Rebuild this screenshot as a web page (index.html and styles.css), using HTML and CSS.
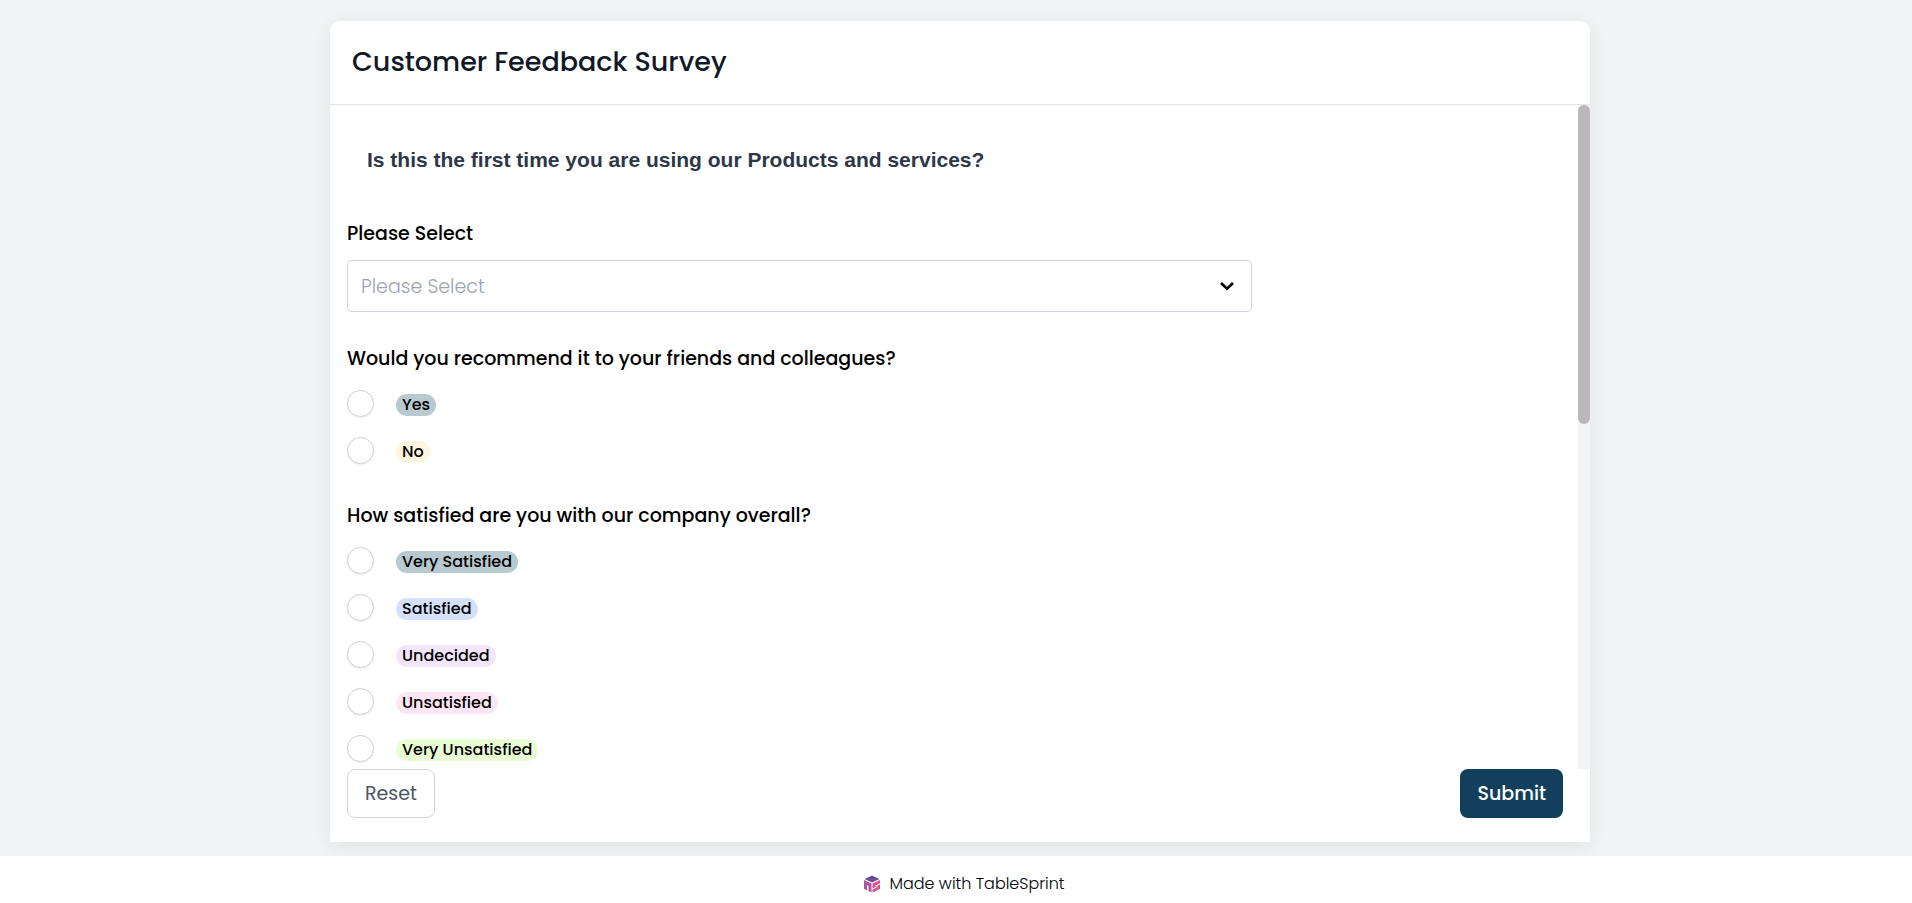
FILE: index.html
```html
<!DOCTYPE html>
<html lang="en">
<head>
    <meta charset="UTF-8">
    <meta name="viewport" content="width=device-width, initial-scale=1.0">
    <title>Customer Feedback Survey</title>
    <link rel="stylesheet" href="styles.css">
</head>
<body>
    <main class="page">
        <form class="card">
            <header class="card-header">
                <h1>Customer Feedback Survey</h1>
            </header>
            <div class="card-main">
                <div class="card-body">
                    <h2 class="section-title">Is this the first time you are using our Products and services?</h2>
                    <div class="field">
                        <label class="field-label" for="first-time">Please Select</label>
                        <div class="select-box">
                            <select id="first-time" name="first-time">
                                <option value="">Please Select</option>
                            </select>
                            <svg class="chevron" viewBox="0 0 16 10" aria-hidden="true">
                                <path d="M2 2l6 5.700L14 2" fill="none" stroke="#000" stroke-width="2.700"/>
                            </svg>
                        </div>
                    </div>
                    <fieldset class="field">
                        <legend class="field-label">Would you recommend it to your friends and colleagues?</legend>
                        <div class="options">
                            <label class="option"><input type="radio" name="recommend"><span class="tag teal">Yes</span></label>
                            <label class="option"><input type="radio" name="recommend"><span class="tag yellow">No</span></label>
                        </div>
                    </fieldset>
                    <fieldset class="field">
                        <legend class="field-label">How satisfied are you with our company overall?</legend>
                        <div class="options">
                            <label class="option"><input type="radio" name="satisfied"><span class="tag teal">Very Satisfied</span></label>
                            <label class="option"><input type="radio" name="satisfied"><span class="tag blue">Satisfied</span></label>
                            <label class="option"><input type="radio" name="satisfied"><span class="tag purple">Undecided</span></label>
                            <label class="option"><input type="radio" name="satisfied"><span class="tag pink">Unsatisfied</span></label>
                            <label class="option"><input type="radio" name="satisfied"><span class="tag green">Very Unsatisfied</span></label>
                        </div>
                    </fieldset>
                </div>
                <div class="scroll-track" aria-hidden="true">
                    <div class="scroll-thumb"></div>
                </div>
            </div>
            <div class="card-actions">
                <button type="reset" class="btn btn-reset">Reset</button>
                <button type="submit" class="btn btn-submit">Submit</button>
            </div>
        </form>
    </main>
    <footer class="footer">
        <svg class="logo" viewBox="0 0 18 18" aria-hidden="true">
            <path d="M9 .5 16.500 4 9 7.400 1.500 4z" fill="#6a4c93"/>
            <path d="M1 5l7.500 3.400v9.100l-3-1.400v-5.200l-1.500-.7v5.200l-3-1.500z" fill="#a9599f"/>
            <path d="M9.500 8.400 17 5v3.200l-4.600 2.200v1.200L17 9.400v4.400l-7.500 3.700v-3l5-2.400v-1l-5 2.300z" fill="#d9548a"/>
        </svg>
        <span>Made with TableSprint</span>
    </footer>
</body>
</html>
```
FILE: styles.css
```css
* {
    box-sizing: border-box;
}
body {
    margin: 0;
    height: 100vh;
    display: flex;
    flex-direction: column;
    font-family: "Poppins", "Inter", sans-serif;
    font-size: 19px;
    color: #000;
    background-color: #f2f3f5;
}
h1, h2, fieldset {
    margin: 0;
    padding: 0;
    border: 0;
}
.page {
    flex: 1;
    min-height: 0;
    display: flex;
    justify-content: center;
    padding: 21px 16px 14px 24px;
}
.card {
    width: 100%;
    max-width: 1260px;
    display: flex;
    flex-direction: column;
    background-color: #fff;
    border-radius: 10px 10px 0 0;
    box-shadow: 0 4px 20px rgba(0, 0, 0, 0.07);
}
.card-header {
    padding: 21px 22px 22px;
    border-bottom: 1px solid #e5e7eb;
}
.card-header h1 {
    font-size: 27px;
    font-weight: 500;
    line-height: 40px;
    color: #111827;
}
.card-main {
    flex: 1;
    min-height: 0;
    display: flex;
}
.card-body {
    flex: 1;
    overflow-y: auto;
    scrollbar-width: none;
    padding: 40px 24px 0 17px;
}
.scroll-track {
    width: 12px;
    background-color: #f3f3f3;
}
.scroll-thumb {
    height: 48%;
    background-color: #bab8b8;
    border-radius: 6px;
}
.section-title {
    padding: 0 20px;
    margin-bottom: 44px;
    font-family: Arial, "Liberation Sans", sans-serif;
    font-size: 21px;
    font-weight: 700;
    line-height: 30px;
    color: #2d3748;
}
.field {
    margin-bottom: 32px;
}
.field-label {
    display: block;
    padding: 0;
    margin-bottom: 11px;
    font-weight: 500;
    line-height: 30px;
}
.select-box {
    position: relative;
    width: 75%;
}
.select-box select {
    appearance: none;
    display: block;
    width: 100%;
    height: 52px;
    padding: 0 40px 0 13px;
    font-family: inherit;
    font-size: 19px;
    font-weight: 300;
    color: #9ca3af;
    background-color: #fff;
    border: 1px solid #d1d5db;
    border-radius: 5px;
}
.chevron {
    position: absolute;
    top: 21px;
    right: 17px;
    width: 16px;
    height: 10px;
    pointer-events: none;
}
.options {
    display: flex;
    flex-direction: column;
    gap: 20px;
    padding: 5px 0;
}
.option {
    display: flex;
    align-items: center;
    gap: 22px;
}
.option input {
    appearance: none;
    width: 27px;
    height: 27px;
    margin: 0;
    border: 1px solid #cbced3;
    border-radius: 50%;
    box-shadow: 0 1px 2px rgba(0, 0, 0, 0.08);
}
.option input:checked {
    border: 8px solid #123f5c;
}
.tag {
    margin-top: 2px;
    padding: 0 6px;
    font-size: 16px;
    font-weight: 500;
    line-height: 22px;
    border-radius: 11px;
}
.teal {
    background-color: #b8c9d0;
}
.yellow {
    background-color: #fef6e0;
}
.blue {
    background-color: #d5e1fc;
}
.purple {
    background-color: #f1e6fc;
}
.pink {
    background-color: #fde6f4;
}
.green {
    background-color: #e9fdd4;
}
.card-actions {
    display: flex;
    justify-content: space-between;
    padding: 0 27px 24px 17px;
}
.btn {
    height: 49px;
    padding: 0 17px;
    font-family: inherit;
    font-size: 19px;
    font-weight: 500;
    border-radius: 8px;
    cursor: pointer;
}
.btn-reset {
    font-weight: 400;
    color: #4b5563;
    background-color: #fff;
    border: 1px solid #d1d5db;
}
.btn-submit {
    color: #fff;
    background-color: #123f5c;
    border: 0;
}
.footer {
    display: flex;
    align-items: center;
    justify-content: center;
    gap: 8px;
    height: 47px;
    padding: 8px 0 0 16px;
    font-size: 16px;
    font-weight: 300;
    line-height: 24px;
    background-color: #fff;
}
.logo {
    width: 18px;
    height: 18px;
}
```
